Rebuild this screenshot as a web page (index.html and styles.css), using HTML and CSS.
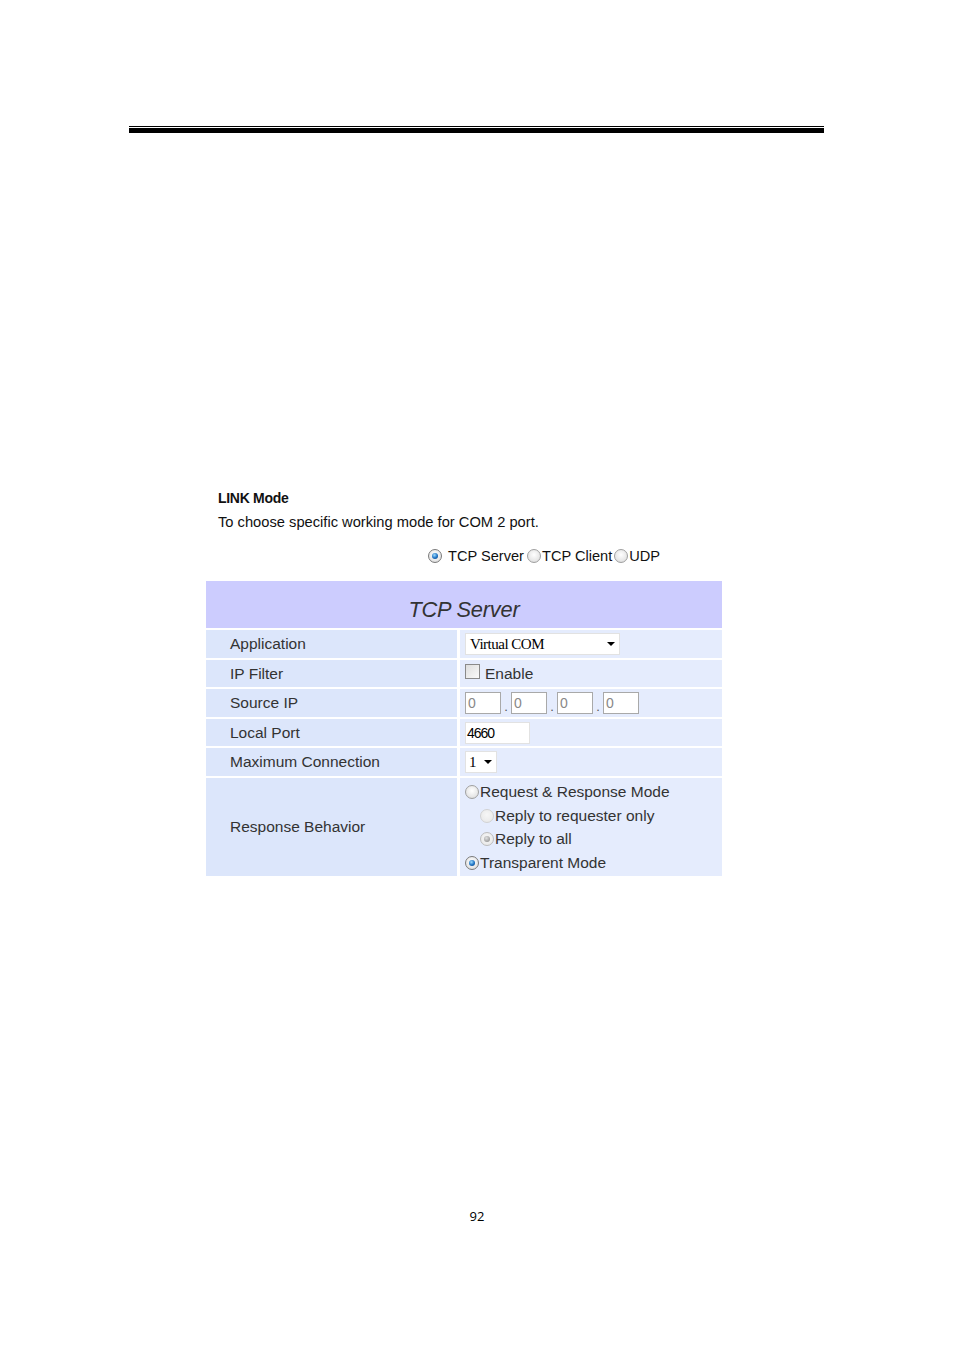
FILE: index.html
```html
<!DOCTYPE html>
<html>
<head>
<meta charset="utf-8">
<link rel="stylesheet" href="styles.css">
</head>
<body>
<div class="page">
  <div class="rule"><div class="thin"></div><div class="thick"></div></div>

  <div class="section">
    <div class="title">LINK Mode</div>
    <div class="desc">To choose specific working mode for COM 2 port.</div>
    <div class="modes">
      <span class="radio on"></span><span class="mlabel first">TCP Server</span>
      <span class="radio"></span><span class="mlabel">TCP Client</span>
      <span class="radio"></span><span class="mlabel">UDP</span>
    </div>

    <div class="grid">
      <div class="head">TCP Server</div>

      <div class="lab">Application</div>
      <div class="val"><div class="select wide"><span>Virtual COM</span><span class="arrow"></span></div></div>

      <div class="lab">IP Filter</div>
      <div class="val"><span class="check"></span><span class="txt">Enable</span></div>

      <div class="lab">Source IP</div>
      <div class="val ip">
        <div class="box">0</div><span class="dot">.</span>
        <div class="box">0</div><span class="dot">.</span>
        <div class="box">0</div><span class="dot">.</span>
        <div class="box">0</div>
      </div>

      <div class="lab">Local Port</div>
      <div class="val"><div class="port">4660</div></div>

      <div class="lab">Maximum Connection</div>
      <div class="val"><div class="select small"><span>1</span><span class="arrow"></span></div></div>

      <div class="lab">Response Behavior</div>
      <div class="val resp">
        <div class="rline"><span class="radio"></span><span class="txt">Request &amp; Response Mode</span></div>
        <div class="rline sub"><span class="radio dis"></span><span class="txt">Reply to requester only</span></div>
        <div class="rline sub"><span class="radio dis ondis"></span><span class="txt">Reply to all</span></div>
        <div class="rline"><span class="radio on"></span><span class="txt">Transparent Mode</span></div>
      </div>
    </div>
  </div>

  <div class="pageno">92</div>
</div>
</body>
</html>
```

FILE: styles.css
```css
html, body { margin: 0; padding: 0; background: #fff; }
.page { width: 954px; height: 1350px; position: relative; font-family: "Liberation Sans", Arial, sans-serif; color: #222; }

.rule { padding-top: 126px; margin-left: 129px; width: 695px; }
.rule .thin { height: 1px; background: #000; }
.rule .thick { height: 5px; background: #000; margin-top: 1px; }

.section { margin-top: 357px; margin-left: 206px; width: 516px; }
.title { margin-left: 12px; font-weight: bold; font-size: 14px; line-height: 16px; letter-spacing: -0.3px; color: #111; }
.desc { margin-left: 12px; margin-top: 8px; font-size: 14.7px; line-height: 16px; letter-spacing: 0; color: #111; }
.modes { margin-top: 17px; margin-left: 222px; display: flex; align-items: center; height: 18px; font-size: 14.6px; color: #111; }
.mlabel { margin-left: 1px; margin-right: 2px; letter-spacing: 0; }
.mlabel.first { margin-left: 6px; margin-right: 3px; }

.radio { display: inline-block; width: 14px; height: 14px; border-radius: 50%; box-sizing: border-box; border: 1px solid #a0a0a0; background: radial-gradient(circle at 50% 40%, #ffffff 0%, #e6e6e6 65%, #cdcdcd 100%); position: relative; flex: none; }
.radio.on { border-color: #7a7a7a; }
.radio.on::after { content: ""; position: absolute; left: 3px; top: 3px; width: 6px; height: 6px; border-radius: 50%; background: radial-gradient(circle at 40% 35%, #9fdcff 0%, #1b70c2 55%, #0a3c74 100%); }
.radio.dis { border-color: #d2d2d2; background: radial-gradient(circle at 50% 40%, #f6f6f6 0%, #e6e6e6 100%); }
.radio.ondis { border-color: #bcbcbc; }
.radio.ondis::after { content: ""; position: absolute; left: 3px; top: 3px; width: 6px; height: 6px; border-radius: 50%; background: radial-gradient(circle at 40% 35%, #e0e0e0 0%, #9a9a9a 75%); }

.grid { margin-top: 16px; display: grid; grid-template-columns: 251px 262px; grid-template-rows: 47px 28px 27px 28px 27px 28px 98px; column-gap: 3px; row-gap: 2px; background: #fff; }
.head { grid-column: 1 / 3; background: #ccccfe; display: flex; align-items: center; justify-content: center; padding-top: 10px; box-sizing: border-box; font-size: 21.8px; font-style: italic; color: #333; letter-spacing: -0.2px; }
.lab { background: #dce6fb; display: flex; align-items: center; padding-left: 24px; font-size: 15.5px; color: #333; }
.val { background: #e5ecfd; display: flex; align-items: center; padding-left: 5px; font-size: 15.5px; color: #333; }

.select { background: #fff; border: 1px solid #e2e2e2; box-sizing: border-box; height: 22px; display: flex; align-items: center; font-family: "Liberation Serif", "Times New Roman", serif; font-size: 15px; color: #000; letter-spacing: -0.5px; }
.select.wide { width: 155px; padding-left: 4px; }
.select.small { width: 32px; padding-left: 3px; }
.select .arrow { margin-left: auto; margin-right: 4px; width: 0; height: 0; border-left: 4px solid transparent; border-right: 4px solid transparent; border-top: 4px solid #000; }

.check { width: 15px; height: 15px; box-sizing: border-box; border: 1px solid #8a8a8a; background: linear-gradient(135deg, #dedede, #fafafa); margin-right: 5px; margin-top: -4px; }

.box { width: 36px; height: 22px; box-sizing: border-box; border: 1px solid #a9a9a9; background: #fff; font-size: 14px; color: #888; padding-left: 2px; line-height: 20px; }
.dot { width: 10px; text-align: center; font-size: 13px; color: #555; padding-top: 6px; }

.port { width: 65px; height: 22px; box-sizing: border-box; border: 1px solid #e2e2e2; background: #fff; font-size: 14px; letter-spacing: -1px; color: #000; line-height: 20px; padding-left: 1px; }

.resp { flex-direction: column; align-items: flex-start; justify-content: center; padding-top: 1px; }
.rline { display: flex; align-items: center; height: 23.5px; }
.rline .radio { margin-right: 1px; }
.rline.sub { padding-left: 15px; }

.pageno { position: absolute; left: 0; width: 954px; top: 1207px; text-align: center; font-family: "Open Sans", sans-serif; font-size: 13px; color: #000; }
```
